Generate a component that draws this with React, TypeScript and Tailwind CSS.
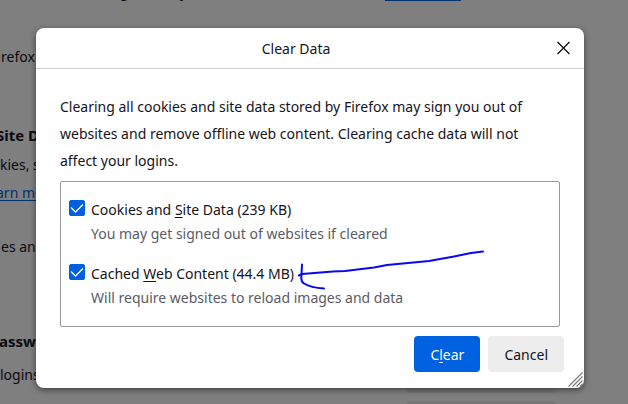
import React, { useState } from "react";

const options = [
  {
    id: "cookies",
    before: "Cookies and ",
    accessKey: "S",
    after: "ite Data (239 KB)",
    hint: "You may get signed out of websites if cleared",
  },
  {
    id: "cache",
    before: "Cached ",
    accessKey: "W",
    after: "eb Content (44.4 MB)",
    hint: "Will require websites to reload images and data",
  },
];

const SettingsPage = () => (
  <div className="h-full overflow-hidden whitespace-nowrap text-[#0b0a11]">
    <div className="-mt-4 flex h-4 items-center pl-30 leading-4">
      <span className="w-15">g</span>
      <span>y</span>
    </div>
    <div className="ml-[385px] h-px w-19 bg-[#003172]" />
    <p className="mt-11 pl-px leading-6">refox</p>
    <h2 className="-ml-1 mt-13 text-[15px] font-bold leading-7">Site D</h2>
    <p className="mt-1 leading-6">kies, s</p>
    <a href="#learn-more" className="-ml-1 mt-1 block leading-6 text-[#003172] underline underline-offset-2">
      arn mo
    </a>
    <p className="mt-7 pl-px leading-7">es and</p>
    <h2 className="-ml-px mt-17 text-[15px] font-bold leading-6">asswo</h2>
    <div className="mt-2 flex items-start justify-between pr-18">
      <p className="leading-7">logins</p>
      <div className="flex flex-col gap-2">
        <div className="h-8 w-[150px] rounded bg-[#767676]" />
        <div className="h-8 w-[150px] rounded bg-[#767676]" />
      </div>
    </div>
  </div>
);

const ClearDataDialog = () => {
  const [checked, setChecked] = useState<Record<string, boolean>>({ cookies: true, cache: true });

  return (
    <div
      role="dialog"
      aria-labelledby="dialog-title"
      className="relative w-full rounded-lg bg-white text-[#15141a] shadow-[0_2px_6px_rgba(0,0,0,0.5)]"
    >
      {/* Title bar */}
      <header className="relative flex h-[41px] items-center justify-center border-b border-[#cfcfd8] pr-7">
        <h1 id="dialog-title">Clear Data</h1>
        <button type="button" aria-label="Close" className="absolute right-2 top-2 p-1">
          <svg className="size-4" viewBox="0 0 16 16" fill="none" stroke="currentColor" strokeWidth="1.4">
            <path d="M1.5 2 13.5 14M13.5 2 1.5 14" />
          </svg>
        </button>
      </header>

      <div className="px-6 pt-6">
        <p className="pr-6 leading-[27px]">
          Clearing all cookies and site data stored by Firefox may sign you out of websites and
          remove offline web content. Clearing cache data will not affect your logins.
        </p>

        <div className="relative mt-[7px] flex flex-col gap-4 rounded-xs border border-[#99999e] px-2 pb-4 pt-4">
          {options.map((option) => (
            <div key={option.id} className="flex gap-[6px]">
              <input
                id={option.id}
                type="checkbox"
                checked={checked[option.id]}
                onChange={(e) => setChecked({ ...checked, [option.id]: e.target.checked })}
                className="mt-[2px] size-4 shrink-0 appearance-none rounded-xs border border-[#8f8f9d] checked:border-[#0061e0] checked:bg-[#0061e0]"
              />
              {checked[option.id] && (
                <svg
                  className="pointer-events-none absolute mt-[2px] size-4"
                  viewBox="0 0 16 16"
                  fill="none"
                  stroke="white"
                  strokeWidth="1.3"
                >
                  <path d="M2 7.5 6.5 12 14 4.5" />
                </svg>
              )}
              <div>
                <label htmlFor={option.id} className="block leading-6">
                  {option.before}
                  <u className="underline-offset-2">{option.accessKey}</u>
                  {option.after}
                </label>
                <p className="leading-6 text-[#5b5b66]">{option.hint}</p>
              </div>
            </div>
          ))}

          {/* Hand-drawn arrow */}
          <svg
            className="pointer-events-none absolute left-59 top-16 h-12 w-48"
            viewBox="0 0 192 48"
            fill="none"
            stroke="#0808f5"
            strokeWidth="2"
            strokeLinecap="round"
            strokeLinejoin="round"
          >
            <path d="M2 29.5 5 28 36 25.5 48 25 77 21.5 90 19 132 15 157 10.5 174 7 186 5.5" />
            <path d="M5 18.5 4.5 28C4 32 4 36 7 37.5 11 40 18 42 27 42.5" />
          </svg>
        </div>
      </div>

      <footer className="flex justify-end gap-2 pb-4 pr-5 pt-[9px]">
        <button type="button" className="h-9 rounded bg-[#0061e0] px-4 text-[#fbfbfe]">
          C<u className="underline-offset-2">l</u>ear
        </button>
        <button type="button" className="h-9 rounded bg-[#ededed] px-4">
          Cancel
        </button>
      </footer>

      {/* Resize grip */}
      <svg
        className="absolute bottom-px right-px size-4"
        viewBox="0 0 16 16"
        stroke="#777777"
        strokeWidth="1.1"
      >
        <path d="M1.5 15.5 15.5 1.5M5.5 15.5 15.5 5.5M9.5 15.5 15.5 9.5M13 15.5 15.5 13" />
      </svg>
    </div>
  );
};

const App = () => (
  <div className="relative h-screen overflow-hidden bg-[#7f7f7f] font-['Noto_Sans',sans-serif] text-[14px]">
    <SettingsPage />
    <div className="absolute inset-0 pb-4 pl-9 pr-11 pt-7">
      <ClearDataDialog />
    </div>
  </div>
);

export default App;
